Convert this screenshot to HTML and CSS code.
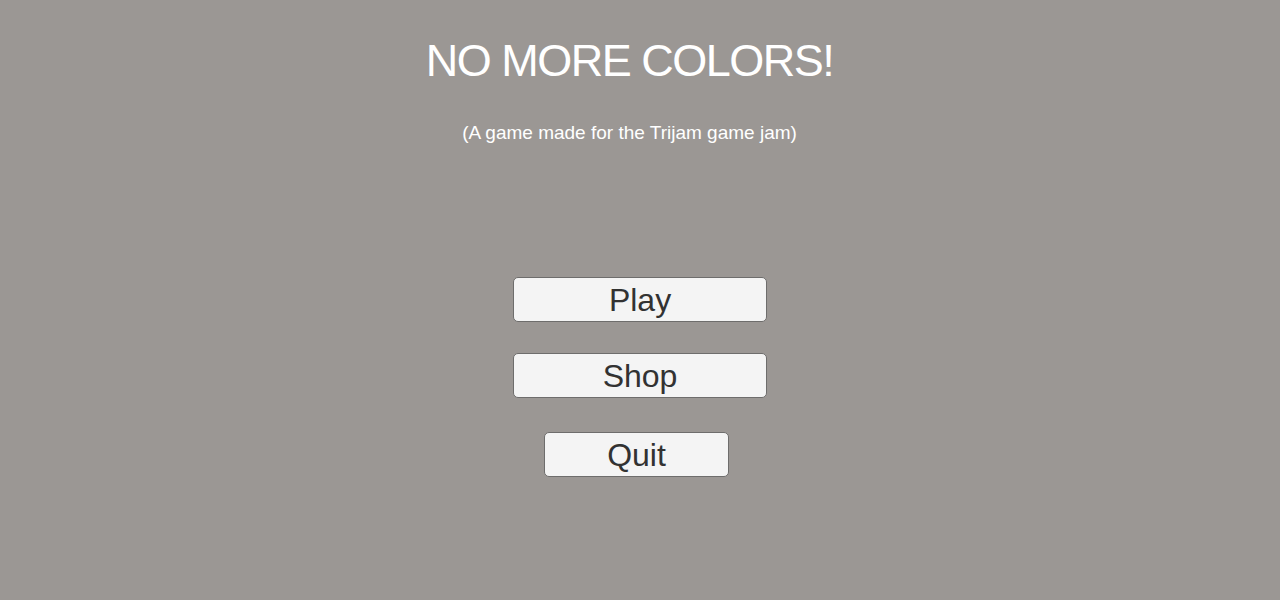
FILE: index.html
```html
<!DOCTYPE html>
<html lang="en">
<head>
<meta charset="utf-8">
<title>No More Colors!</title>
<link rel="stylesheet" href="styles.css">
</head>
<body>
<main class="menu">
  <header class="menu-head">
    <h1 class="title">NO MORE COLORS!</h1>
    <p class="subtitle">(A game made for the Trijam game jam)</p>
  </header>
  <nav class="menu-buttons">
    <button class="btn btn-wide btn-play">Play</button>
    <button class="btn btn-wide btn-shop">Shop</button>
    <button class="btn btn-narrow btn-quit">Quit</button>
  </nav>
</main>
</body>
</html>
```

FILE: styles.css
```css
html, body {
  margin: 0;
  padding: 0;
  height: 100%;
}

body {
  background: #9b9794;
  font-family: "Liberation Sans", Arial, sans-serif;
  overflow: hidden;
}

.menu {
  display: flex;
  flex-direction: column;
  align-items: center;
  padding-top: 38px;
}

.menu-head {
  display: flex;
  flex-direction: column;
  align-items: center;
  margin-right: 21px;
}

.title {
  margin: 0;
  font-size: 45px;
  line-height: 46px;
  letter-spacing: -1.5px;
  font-weight: normal;
  color: #ffffff;
}

.subtitle {
  margin: 38px 0 0;
  font-size: 19px;
  line-height: 22px;
  color: #ffffff;
}

.menu-buttons {
  display: flex;
  flex-direction: column;
  align-items: center;
  margin-top: 133px;
}

.btn {
  box-sizing: border-box;
  height: 45px;
  background: #f4f4f4;
  border: 1px solid #6e6d6c;
  border-radius: 5px;
  color: #323232;
  font-family: "Liberation Sans", Arial, sans-serif;
  font-size: 32px;
  line-height: 1;
  padding: 0;
  cursor: pointer;
}

.btn-wide {
  width: 254px;
}

.btn-shop {
  margin-top: 31px;
}

.btn-narrow {
  width: 185px;
  margin-top: 34px;
  margin-left: -7px;
}
```
